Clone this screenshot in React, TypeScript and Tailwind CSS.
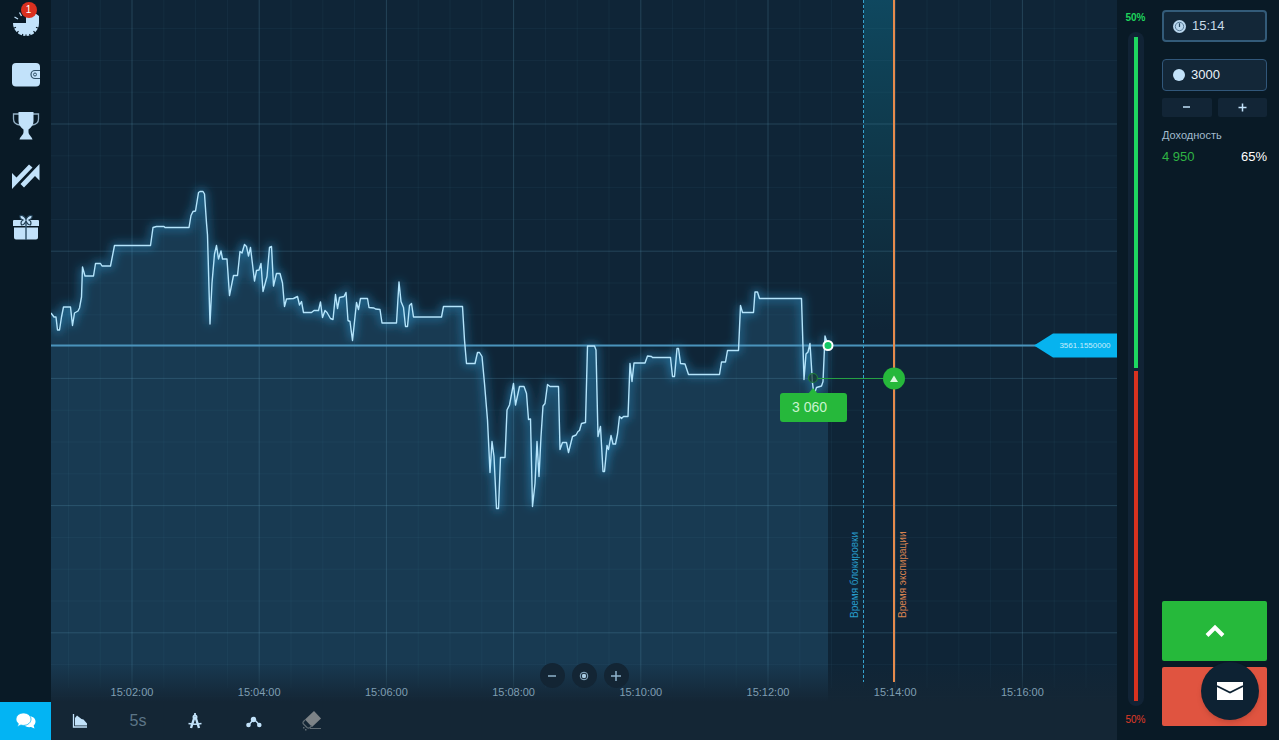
import type { ReactNode } from "react";

const LINE =
  "51,313 54,317 56,317 57.5,330 59.5,330 61.5,317 63.5,307 70.5,307 72.5,325.5 74.5,313 78,311 79.5,308 81.5,297 82.5,267 85,276 93.5,276 95.5,263.5 100.5,263.5 102,266 110.5,266 114.5,245.5 150.5,245.5 153,227.5 156.5,226.5 164,226.5 165,227.5 189,227.5 191,215.5 193,211.5 195.5,211 198.5,192.5 200,191.5 203,191.5 204.5,194 206.5,223 207.5,235 210,324 212,283 214.5,254 216.5,245.5 218.5,259 221,251 222.5,259 227,259 229.5,295.5 233.5,275.5 237.5,275.5 240,251.5 242,253 244.5,244.5 246.5,246.5 248.5,256 250.5,247.5 254.5,281 256.5,270.5 259,270 261,263.5 263,291.5 267,276.5 269.5,247.5 271.5,246.5 273.5,286 276.5,273.5 280,273.5 282.5,283 284.5,306.5 286.5,299 293.5,298.5 297.5,296.5 299.5,305 301.5,301.5 303.5,312.5 311.5,312.5 314,310.5 318.5,310.5 320.5,302 322.5,317.5 325,310.5 327,312.5 330.5,318.5 333,319.5 335.5,294.5 337.5,308.5 339.5,297.5 344,296.5 346,292.5 348,320.5 350,321.5 352.5,340.5 356.5,302.5 358.5,309.5 360.5,298.5 367.5,298.5 369,307.5 374,308 375.5,309 380,309.5 382,323 396.5,323 399,282 401,301.5 403.5,307.5 405.5,326.5 407.5,326.5 409.5,305.5 411.5,303.5 413.5,317 441.5,317 443.5,306.5 462.5,306.5 464.5,340 466.5,363.5 475,363.5 477.5,352.5 479.5,352.5 482,356.5 484.5,383.5 487.5,420 490,472.5 492,441.5 494,456.5 496.5,508.5 498.5,508.5 500.5,457.5 505,457.5 507,410 509.5,405 513.5,383.5 515.5,405 519.5,386.5 524,386.5 526.5,393.5 528.5,419.5 530.5,419 532.5,506.5 535,483.5 537,441.5 539,476.5 541,436.5 543,406 545,403.5 547.5,384.5 550,386.5 558.5,386.5 560,449.5 562.5,442.5 566.5,442.5 568.5,452.5 572.5,436.5 576,435 578,431.5 579.5,430.5 581.5,423.5 585.5,422.5 587.5,346 594.5,346 596,350 598,436.5 600.5,426.5 603,471.5 604.5,471.5 607,445.5 608.5,449.5 611,435.5 613,444 615.5,444 617.5,434 619.5,416.5 621.5,418.5 623.5,416.5 628,416.5 630,363.5 632,381.5 634,363 645,363 647.5,356 651.5,356.5 652.5,357.5 670.5,357.5 672.5,376.5 674.5,376.5 677,348.5 678.5,348.5 680.5,363.5 685,364 688.5,374.5 719.5,374.5 721.5,362 725.5,362 727.5,350.5 738.5,350.5 740.5,305.5 742.5,312.5 753.5,312.5 755,292 757.5,292 759.5,298.5 801.5,298.5 804,379.5 806,354 808,352 810,343.5 812.5,383 814,395 816.5,387.5 821.5,386 823,381.5 825,336 828,345.5";

const TIMES = [
  "15:02:00",
  "15:04:00",
  "15:06:00",
  "15:08:00",
  "15:10:00",
  "15:12:00",
  "15:14:00",
  "15:16:00",
];

const GRID_STEP = 31.8;

function Grid() {
  const cols = Array.from({ length: 33 }, (_, i) => i);
  const rows = Array.from({ length: 22 }, (_, i) => i);
  return (
    <g stroke="#5f9fb8">
      {cols.map((i) => (
        <line
          key={i}
          x1={68.4 + i * GRID_STEP}
          x2={68.4 + i * GRID_STEP}
          y1="0"
          y2="688"
          strokeOpacity={i % 4 === 2 ? 0.26 : 0.08}
        />
      ))}
      {rows.map((i) => (
        <line
          key={i}
          x1="51"
          x2="1117"
          y1={28.6 + i * GRID_STEP}
          y2={28.6 + i * GRID_STEP}
          strokeOpacity={i % 4 === 3 ? 0.26 : 0.08}
        />
      ))}
    </g>
  );
}

function Chart() {
  return (
    <svg
      className="block h-full w-full"
      viewBox="51 0 1066 702"
      preserveAspectRatio="xMidYMid slice"
      fontFamily="'Liberation Sans', Arial, sans-serif"
      role="img"
      aria-label="3561.1550000"
    >
      <defs>
        <linearGradient id="lock" x1="0" y1="0" x2="0" y2="1">
          <stop offset="0" stopColor="#0f5f7a" stopOpacity="0.6" />
          <stop offset="1" stopColor="#0f5f6a" stopOpacity="0" />
        </linearGradient>
        <linearGradient id="foot" x1="0" y1="0" x2="0" y2="1">
          <stop offset="0" stopColor="#142635" stopOpacity="0" />
          <stop offset="1" stopColor="#142635" />
        </linearGradient>
        <filter id="glow" x="-5%" y="-10%" width="110%" height="120%">
          <feGaussianBlur stdDeviation="5" />
        </filter>
      </defs>
      <rect x="51" width="1066" height="702" fill="#0f2537" />
      <rect x="864" width="30" height="330" fill="url(#lock)" />
      <polygon points={`51,702 ${LINE} 828,702`} fill="#183a52" />
      <Grid />
      <rect x="51" y="662" width="1066" height="40" fill="url(#foot)" />
      <polyline
        points={LINE}
        fill="none"
        stroke="#2f9fd8"
        strokeWidth="5"
        strokeOpacity="0.55"
        filter="url(#glow)"
      />
      <line x1="51" x2="1040" y1="345.5" y2="345.5" stroke="#4a93bb" strokeWidth="2" />
      <polyline
        points={LINE}
        fill="none"
        stroke="#b4e4fb"
        strokeWidth="1.4"
        strokeLinejoin="round"
      />

      {/* block and expiration times */}
      <line
        x1="863.5"
        x2="863.5"
        y1="0"
        y2="682"
        stroke="#35a2cc"
        strokeDasharray="3 2"
      />
      <line x1="894" x2="894" y1="0" y2="682" stroke="#e58a4c" strokeWidth="2" />
      <text transform="translate(858 618) rotate(-90)" fontSize="10" fill="#279ccb">
        Время блокировки
      </text>
      <text transform="translate(906 618) rotate(-90)" fontSize="10" fill="#d98350">
        Время экспирации
      </text>

      {/* open deal */}
      <line x1="817" x2="883" y1="378.5" y2="378.5" stroke="#25a043" />
      <circle
        cx="813"
        cy="378"
        r="4.5"
        fill="#14392f"
        fillOpacity="0.7"
        stroke="#1f7d3b"
        strokeWidth="1.2"
      />
      <circle cx="894" cy="378.5" r="11" fill="#26b83b" />
      <path d="M890 382l4-6.5 4 6.5z" fill="#d9f7dd" />
      <path d="M808 394l5-6 5 6z" fill="#26b83b" />
      <rect x="780" y="393" width="67" height="29" rx="3" fill="#26b83b" />
      <text x="809.5" y="412" fontSize="14" textAnchor="middle" fill="#c9f3cf">
        3 060
      </text>
      <circle cx="828" cy="345.5" r="4.5" fill="#12c765" stroke="#fff" strokeWidth="2" />

      {/* current price */}
      <polygon points="1034,345.5 1053,333.5 1117,333.5 1117,357.5 1053,357.5" fill="#06b3ef" />
      <text x="1085" y="348" fontSize="8" textAnchor="middle" fill="#c5edfc">
        3561.1550000
      </text>

      <g fontSize="11" fill="#7f9eb2" textAnchor="middle">
        {TIMES.map((time, i) => (
          <text key={time} x={132 + i * 127.2} y="696">
            {time}
          </text>
        ))}
      </g>
    </svg>
  );
}

function SideButton({ label, children }: { label: string; children: ReactNode }) {
  return (
    <button type="button" aria-label={label} className="relative size-7 text-[#c2e2fa]">
      {children}
    </button>
  );
}

function Sidebar() {
  return (
    <aside className="flex w-[51px] shrink-0 flex-col items-center justify-between bg-[#091a26]">
      <nav className="flex flex-col gap-[23px] pt-[10px]">
        <SideButton label="История">
          <svg viewBox="0 0 28 28" fill="currentColor">
            <path d="M14 13H1A13 13 0 0 0 27 13V6L20 1H14z" />
            <g stroke="#091a26" strokeWidth="1.2">
              <path d="M1 18.500l3-1.200M4.500 23.500l2-2.400M10 27l.8-3M14 28v-3.500M18.500 27l-.9-3M23.500 23.500l-2-2.400M27 18.500l-3-1.200" />
            </g>
            <path d="M2.500 7l3.500 2M7.500 2.500l2 3.500" stroke="currentColor" strokeWidth="1.3" />
          </svg>
          <span className="absolute -top-2 left-[9px] flex size-4 items-center justify-center rounded-full bg-[#d9301f] text-[10px] leading-none text-white">
            1
          </span>
        </SideButton>
        <SideButton label="Кошелёк">
          <svg viewBox="0 0 28 28" fill="currentColor">
            <rect y="2" width="28" height="23.500" rx="4" />
            <path
              d="M28 9.500h-5a4 4 0 0 0 0 8h5"
              fill="none"
              stroke="#2f5068"
              strokeWidth="1.200"
            />
            <circle cx="23" cy="13.500" r="1.500" fill="none" stroke="#2f5068" />
          </svg>
        </SideButton>
        <SideButton label="Турниры">
          <svg viewBox="0 0 28 28" fill="currentColor">
            <path d="M6.500 0h15v9c0 4-2 6-5 8.500v2.500c0 3 3 4 4 7.500h-13c1-3.500 4-4.500 4-7.500v-2.500C8.500 15 6.500 13 6.500 9z" />
            <path
              d="M7 2H1.500v5c0 3.500 2 5.500 6.500 6M21 2h5.500v5c0 3.500-2 5.500-6.500 6"
              fill="none"
              stroke="currentColor"
              strokeOpacity="0.75"
              strokeWidth="1.300"
            />
          </svg>
        </SideButton>
        <SideButton label="Сделки">
          <svg viewBox="0 0 28 28" fill="currentColor">
            <path d="M0 26V10l4.500 4.500L17 1.500l3.500 3zM27.500 1v16.500L23 13 12 24.500 8.500 21z" />
          </svg>
        </SideButton>
        <SideButton label="Подарки">
          <svg viewBox="0 0 28 28" fill="currentColor">
            <path d="M2 6h24a1 1 0 0 1 1 1v5H1V7a1 1 0 0 1 1-1zM2 13.500h24v10a2 2 0 0 1-2 2H4a2 2 0 0 1-2-2z" />
            <path d="M14 8v18" stroke="#35566e" strokeWidth="1.500" />
            <path
              d="M14 5.500C12.500 2 10.500 1 8 1.500c-.5 2 .5 3.500 3 4.500-2 1-2.500 2.500-1.500 5 2.500 0 3.500-1.500 4.500-4 1 2.500 2 4 4.500 4 1-2.500.5-4-1.500-5 2.500-1 3.500-2.500 3-4.500-2.500-.5-4.500.5-6 4z"
              stroke="#213f54"
              strokeWidth="1.200"
            />
          </svg>
        </SideButton>
      </nav>
      <button
        type="button"
        aria-label="Чат"
        className="flex h-[38px] w-full items-center justify-center bg-[#03b4f3]"
      >
        <svg viewBox="0 0 20 16" className="w-5">
          <path
            d="M12.500 3c4 0 7 2.300 7 5.500 0 1.600-.7 3-1.900 4l.9 3-3.500-1.500c-3 .5-6-.5-7.500-2.500z"
            fill="#fff"
          />
          <path
            d="M7.500 0C11.600 0 15 2.700 15 6.200s-3.400 6.200-7.500 6.200c-.9 0-1.800-.1-2.600-.4L1.500 13.800l.8-3.300C.9 9.400 0 7.900 0 6.200 0 2.700 3.400 0 7.500 0z"
            fill="#fff"
            stroke="#03b4f3"
            strokeWidth=".8"
          />
        </svg>
      </button>
    </aside>
  );
}

function ToolButton({ label, children }: { label: string; children: ReactNode }) {
  return (
    <button
      type="button"
      aria-label={label}
      className="flex h-full w-[58px] items-center justify-center text-[#c2e2fa]"
    >
      {children}
    </button>
  );
}

function Toolbar() {
  return (
    <div className="flex h-[38px] shrink-0 items-center bg-[#142635]">
      <ToolButton label="Тип графика">
        <svg viewBox="0 0 16 16" className="w-4" fill="currentColor">
          <path d="M1.500 1v13H15" fill="none" stroke="currentColor" strokeWidth="1.300" />
          <path d="M3 5l2-2.500 4.500 3.500 2 .5 3.500 4v2H3z" />
        </svg>
      </ToolButton>
      <ToolButton label="5s">
        <span className="text-base text-[#5c7587]">5s</span>
      </ToolButton>
      <ToolButton label="Инструменты">
        <svg
          viewBox="0 0 16 16"
          className="w-4"
          fill="none"
          stroke="currentColor"
          strokeWidth="2.400"
        >
          <path d="M6.500 4L3 15M7.500 4L11 15" />
          <path d="M.500 10.500q6.500 1.500 13 0" strokeWidth="1.600" />
          <path d="M7 0v3" strokeWidth="1.800" />
          <circle cx="7" cy="4" r="1.500" strokeWidth="2" />
        </svg>
      </ToolButton>
      <ToolButton label="Индикаторы">
        <svg viewBox="0 0 16 16" className="w-4" fill="currentColor">
          <path d="M2.500 12L8 6l5.500 6" fill="none" stroke="currentColor" strokeWidth="1.500" />
          <circle cx="2.500" cy="12" r="2.300" />
          <circle cx="7.500" cy="6.500" r="2.700" />
          <circle cx="13.300" cy="12" r="2.300" />
        </svg>
      </ToolButton>
      <ToolButton label="Стереть">
        <svg viewBox="0 0 20 20" className="w-5" fill="#7d8387">
          <path d="M12 0l7 7.500-9 8.500-7-7.500z" />
          <path
            d="M3 9l-1.500 1.500c-1 1-.5 2 0 2.500L5 16.500c1 .8 2 .8 3 0l2-2M8 17.500h11"
            fill="none"
            stroke="#5f6b73"
            strokeWidth="1.200"
          />
          <path d="M1 16h1.500v1.500H1zM3 18h1.500v1.500H3z" fill="#5f6b73" />
        </svg>
      </ToolButton>
    </div>
  );
}

function ZoomButton({ label, children }: { label: string; children: ReactNode }) {
  return (
    <button
      type="button"
      aria-label={label}
      className="flex size-[25px] items-center justify-center rounded-full bg-[#132534]"
    >
      <svg
        viewBox="0 0 12 12"
        className="w-3"
        fill="none"
        stroke="#8fb3cb"
        strokeWidth="1.500"
      >
        {children}
      </svg>
    </button>
  );
}

// share of up and down deals
function Sentiment() {
  return (
    <div className="flex w-[37px] shrink-0 flex-col items-center pt-3 pb-[14px] text-[10px] leading-3">
      <span className="font-bold text-[#1fd35c]">50%</span>
      <div className="my-2 flex w-4 flex-1 flex-col items-center gap-[3px] rounded-full bg-[#112335] py-[5px]">
        <div className="w-1 flex-1 bg-[#1ed760]" />
        <div className="w-1 flex-1 bg-[#d8321f]" />
      </div>
      <span className="text-[#e03a26]">50%</span>
    </div>
  );
}

function DealPanel() {
  return (
    <aside className="flex w-[162px] shrink-0 bg-[#091a26]">
      <Sentiment />
      <form className="flex flex-1 flex-col pt-[10px] pr-3 pb-[14px] pl-2 text-[13px]">
        <label className="flex h-8 items-center gap-[6px] rounded border-2 border-[#335b79] bg-[#132738] px-[9px]">
          <svg viewBox="0 0 14 14" className="w-[13px] shrink-0">
            <circle cx="7" cy="7" r="7" fill="#b9d6ed" />
            <circle cx="7" cy="7" r="4.500" fill="none" stroke="#4f7390" />
            <path d="M7 3.500V7.500" stroke="#24445c" strokeWidth="1.300" />
          </svg>
          <input
            aria-label="Время экспирации"
            className="w-full min-w-0 text-[#c8dbe8] outline-none"
            defaultValue="15:14"
          />
        </label>
        <label className="mt-[17px] flex h-8 items-center gap-[6px] rounded-sm border border-[#31577a] bg-[#132738] px-[10px]">
          <span className="size-3 shrink-0 rounded-full bg-[#c2e2fa]" />
          <input
            aria-label="Сумма"
            className="w-full min-w-0 text-[#e9f3fa] outline-none"
            defaultValue="3000"
          />
        </label>
        <div className="mt-[7px] grid grid-cols-2 gap-[6px]">
          <button
            type="button"
            aria-label="Уменьшить"
            className="flex h-[19px] items-center justify-center rounded-xs bg-[#122536]"
          >
            <svg viewBox="0 0 9 9" className="w-[9px]" stroke="#c2e2fa" strokeWidth="1.500">
              <path d="M1 4h7" />
            </svg>
          </button>
          <button
            type="button"
            aria-label="Увеличить"
            className="flex h-[19px] items-center justify-center rounded-xs bg-[#122536]"
          >
            <svg viewBox="0 0 9 9" className="w-[9px]" stroke="#c2e2fa" strokeWidth="1.500">
              <path d="M.500 4.500h8M4.500.500v8" />
            </svg>
          </button>
        </div>
        <p className="mt-[10px] text-[11px] leading-4 text-[#a3bccd]">Доходность</p>
        <div className="mt-1 flex justify-between leading-5">
          <span className="text-[#2fb344]">4 950</span>
          <span className="text-white">65%</span>
        </div>
        <div className="relative mt-auto flex flex-col gap-[6px]">
          <button
            type="button"
            aria-label="Выше"
            className="flex h-[60px] items-center justify-center rounded-xs bg-[#26b93b]"
          >
            <svg
              viewBox="0 0 20 14"
              className="w-5"
              fill="none"
              stroke="#fff"
              strokeWidth="4"
            >
              <path d="M2 11.500l8-8 8 8" />
            </svg>
          </button>
          <button
            type="button"
            aria-label="Ниже"
            className="h-[59px] rounded-xs bg-[#e05440]"
          />
          <button
            type="button"
            aria-label="Сообщения"
            className="absolute right-2 bottom-[6px] flex size-[58px] items-center justify-center rounded-full bg-[#0d2233] shadow-md"
          >
            <svg viewBox="0 0 26 18" className="w-[26px]">
              <path d="M0 0h26v18H0z" fill="#fff" />
              <path
                d="M0 4l13 6.500L26 4"
                fill="none"
                stroke="#0d2233"
                strokeWidth="1.600"
              />
            </svg>
          </button>
        </div>
      </form>
    </aside>
  );
}

export default function App() {
  return (
    <div className="flex h-screen bg-[#091a26] font-['Liberation_Sans',Arial,sans-serif]">
      <Sidebar />
      <main className="flex min-w-0 flex-1 flex-col">
        <div className="relative min-h-0 flex-1">
          <Chart />
          <div className="absolute inset-x-0 bottom-[14px] flex justify-center gap-[7px]">
            <ZoomButton label="Отдалить">
              <path d="M2 6h8" />
            </ZoomButton>
            <ZoomButton label="Сбросить масштаб">
              <circle cx="6" cy="6" r="3.800" strokeWidth="1" />
              <circle cx="6" cy="6" r="2.200" fill="#a9cbe2" stroke="none" />
            </ZoomButton>
            <ZoomButton label="Приблизить">
              <path d="M1 6h10M6 1v10" />
            </ZoomButton>
          </div>
        </div>
        <Toolbar />
      </main>
      <DealPanel />
    </div>
  );
}
